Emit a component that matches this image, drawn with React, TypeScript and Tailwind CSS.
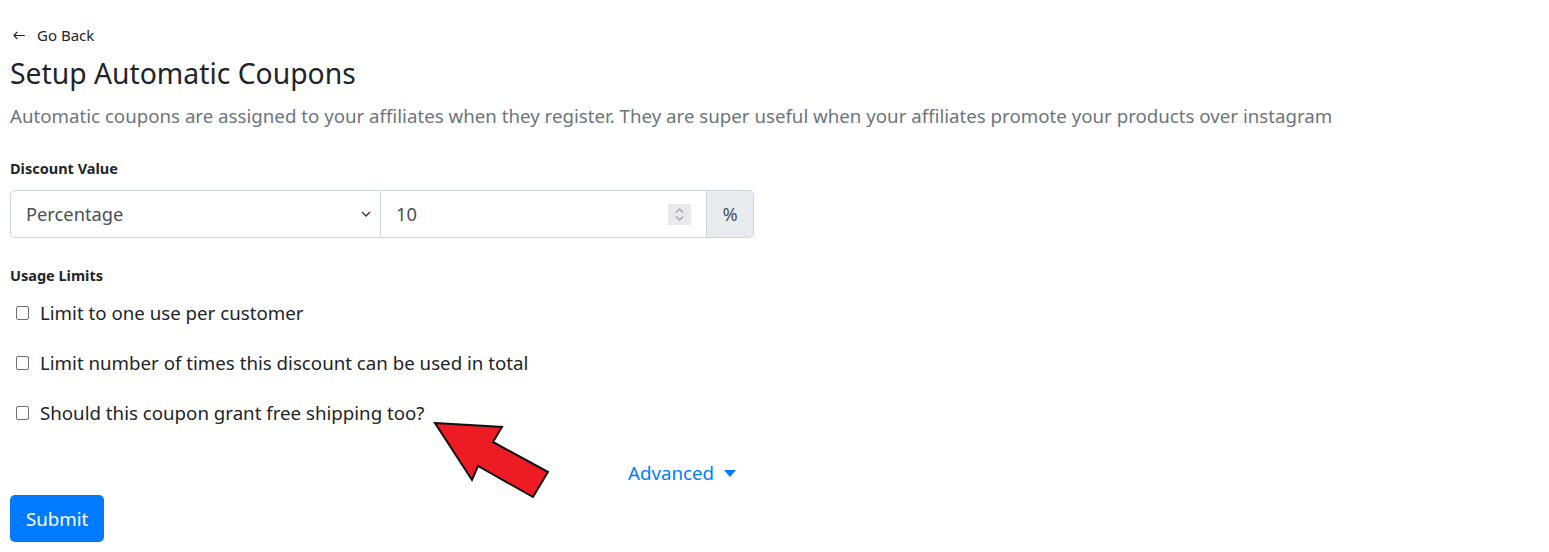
function Check({ label }: { label: string }) {
  return (
    <label className="flex items-center h-[50px] text-[18.7px] text-[#212529]">
      <span className="ml-[6px] mr-[11px] w-[13px] h-[14px] border border-[#6f6f6f] rounded-[2px] bg-white" />
      {label}
    </label>
  )
}

export default function App() {
  const limits = [
    "Limit to one use per customer",
    "Limit number of times this discount can be used in total",
    "Should this coupon grant free shipping too?",
  ]
  return (
    <div className="relative w-[1549px] h-[552px] bg-white font-['Noto_Sans',sans-serif] text-[#212529] px-[10px] pt-[24px]">
      <a className="flex items-center gap-[12px] text-[15px] text-[#212529] h-[22px]">
        <svg className="ml-[3px]" width="12" height="9" viewBox="0 0 12 9" fill="none" stroke="#212529" strokeWidth="1.2">
          <path d="M0.8 4.5h11M0.8 4.5l3.6-3.6M0.8 4.5l3.6 3.6" />
        </svg>
        Go Back
      </a>
      <h3 className="text-[28.3px] leading-[1.2] mt-[11px] mb-[11px]">Setup Automatic Coupons</h3>
      <p className="text-[18.7px] text-[#6c757d] leading-[1.5]">
        Automatic coupons are assigned to your affiliates when they register. They are super useful when your affiliates promote your products over instagram
      </p>

      <div className="w-[744px]">
        <div className="mt-[27px] text-[14.5px] font-bold h-[22px] leading-[22px]">Discount Value</div>
        <div className="mt-[11px] flex h-[48px] text-[18.3px]">
          <div className="w-[371px] flex items-center justify-between border border-[#ced4da] rounded-l-[5px] pl-[15px] pr-[9px] text-[#495057]">
            <span>Percentage</span>
            <svg width="10" height="6" viewBox="0 0 10 6" fill="none" stroke="#333" strokeWidth="1.3">
              <path d="M1 1l4 4 4-4" />
            </svg>
          </div>
          <div className="flex-1 flex items-center justify-between border-y border-r border-[#ced4da] pl-[15px] pr-[15px] text-[#495057]">
            <span>10</span>
            <span className="w-[23px] h-[21px] bg-[#e9e9ed] flex flex-col items-center justify-center gap-[3px]">
              <svg width="9" height="5" viewBox="0 0 9 5" fill="none" stroke="#9a9aa2" strokeWidth="1.2">
                <path d="M1 4.5l3.5-3.5 3.5 3.5" />
              </svg>
              <svg width="9" height="5" viewBox="0 0 9 5" fill="none" stroke="#9a9aa2" strokeWidth="1.2">
                <path d="M1 0.5l3.5 3.5 3.5-3.5" />
              </svg>
            </span>
          </div>
          <div className="w-[47px] flex items-center justify-center bg-[#e9ecef] border-y border-r border-[#ced4da] rounded-r-[5px] text-[#495057]">
            %
          </div>
        </div>

        <div className="mt-[26px] text-[14.5px] font-bold h-[22px] leading-[22px]">Usage Limits</div>
        <div className="mt-[2px]">
          {limits.map((l) => (
            <Check key={l} label={l} />
          ))}
        </div>

        <div className="flex justify-end pr-[18px] mt-[21px]">
          <a className="flex items-center gap-[10px] text-[18.7px] text-[#007bff]">
            Advanced
            <svg width="12" height="7" viewBox="0 0 12 7">
              <path d="M0 0h12L6 7z" fill="#007bff" />
            </svg>
          </a>
        </div>

        <button className="mt-[8px] h-[47px] px-[16px] rounded-[5px] bg-[#007bff] text-white text-[18.7px]">
          Submit
        </button>
      </div>

      <svg className="absolute left-0 top-0 pointer-events-none" width="1549" height="552">
        <polygon
          points="435,423 502,427 493,442 548,472 533,497 478,466 472,480"
          fill="#ed1c24"
          stroke="#111"
          strokeWidth="2"
          strokeLinejoin="miter"
        />
      </svg>
    </div>
  )
}
